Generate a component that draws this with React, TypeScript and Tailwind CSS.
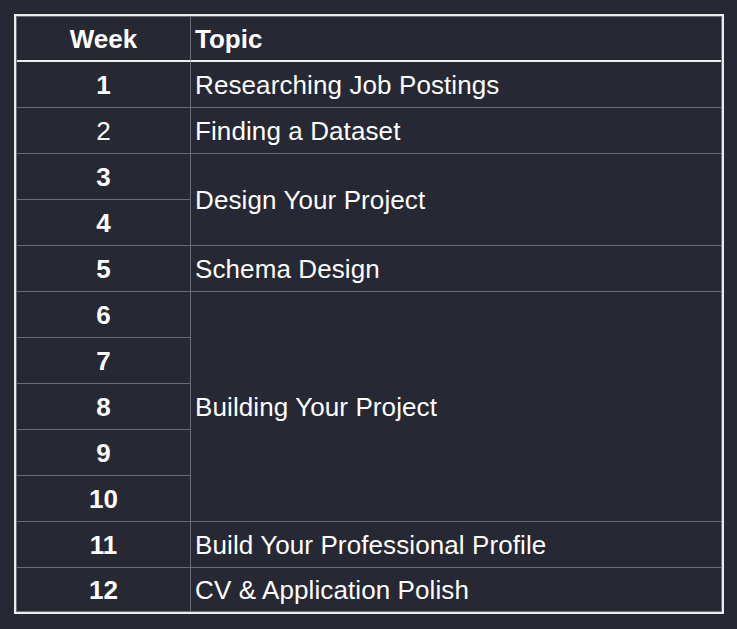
import React from "react";

type Row = { week: string; bold: boolean; topic?: string; span?: number };

const rows: Row[] = [
  { week: "1", bold: true, topic: "Researching Job Postings", span: 1 },
  { week: "2", bold: false, topic: "Finding a Dataset", span: 1 },
  { week: "3", bold: true, topic: "Design Your Project", span: 2 },
  { week: "4", bold: true },
  { week: "5", bold: true, topic: "Schema Design", span: 1 },
  { week: "6", bold: true, topic: "Building Your Project", span: 5 },
  { week: "7", bold: true },
  { week: "8", bold: true },
  { week: "9", bold: true },
  { week: "10", bold: true },
  { week: "11", bold: true, topic: "Build Your Professional Profile", span: 1 },
  { week: "12", bold: true, topic: "CV & Application Polish", span: 1 },
];

const spanClass: Record<number, string> = {
  1: "row-span-1",
  2: "row-span-2",
  5: "row-span-5",
};

export default function App() {
  return (
    <div
      className="w-[737px] h-[629px] bg-[#262834] p-[14px] text-white"
      style={{ fontFamily: '"Liberation Sans", Arial, Helvetica, sans-serif' }}
    >
      <div className="w-[710px] h-[600px] border-2 border-[#ececec]">
        <div className="border border-[#6b6d76] h-full">
          <div className="grid grid-cols-[174px_530px] grid-rows-[45px_45px_repeat(10,46px)_44px] text-[26px] leading-none">
            <div className="border-b-2 border-b-[#ececec] border-r border-r-[#6b6d76] flex items-center justify-center font-bold pt-px">
              Week
            </div>
            <div className="border-b-2 border-b-[#ececec] flex items-center pl-1 font-bold pt-px">
              Topic
            </div>
            {rows.map((r, i) => {
              const top = i === 0 ? "" : "border-t border-t-[#6b6d76]";
              return (
                <React.Fragment key={r.week}>
                  <div
                    className={`col-start-1 border-r border-r-[#6b6d76] flex items-center justify-center pt-px ${top} ${
                      r.bold ? "font-bold" : "font-normal"
                    }`}
                    style={{ gridRowStart: i + 2 }}
                  >
                    {r.week}
                  </div>
                  {r.topic && (
                    <div
                      className={`col-start-2 flex items-center pl-1 pt-px tracking-[0.1px] ${top} ${spanClass[r.span ?? 1]}`}
                      style={{ gridRowStart: i + 2 }}
                    >
                      {r.topic}
                    </div>
                  )}
                </React.Fragment>
              );
            })}
          </div>
        </div>
      </div>
    </div>
  );
}
